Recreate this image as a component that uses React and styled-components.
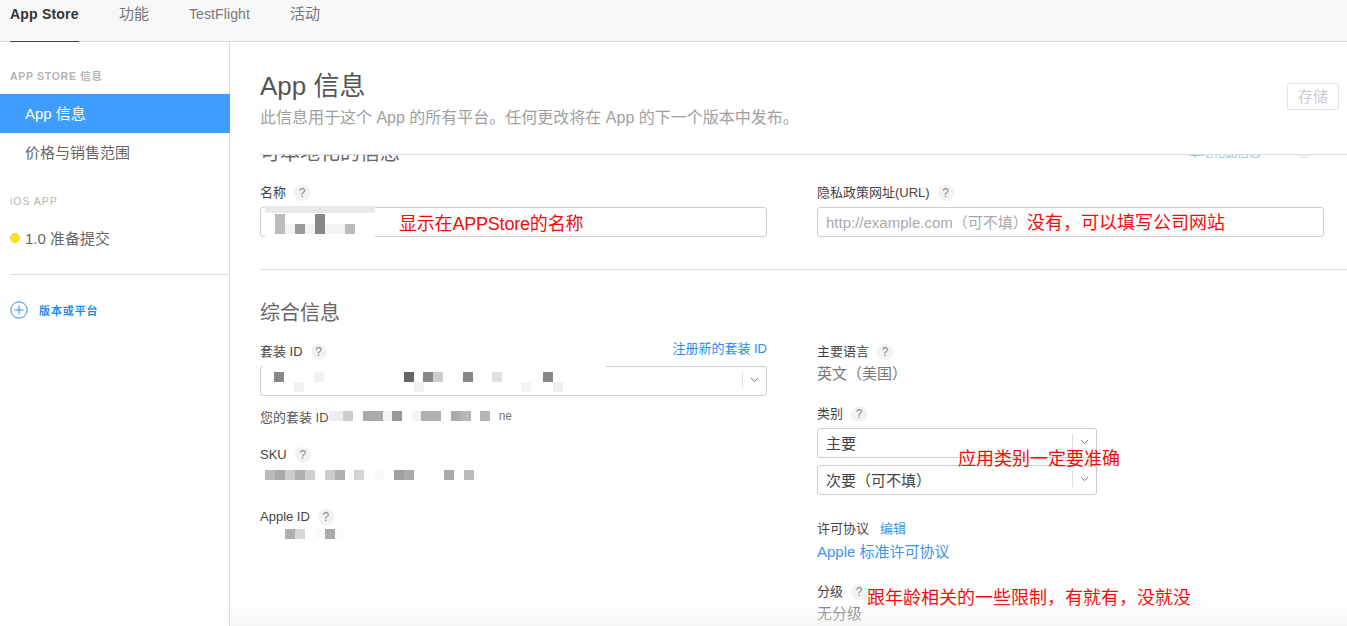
import React from "react";
import styled, { createGlobalStyle } from "styled-components";

const Global = createGlobalStyle`
  html, body { margin: 0; padding: 0; background: #fff; }
  body { font-family: "Liberation Sans", "Noto Sans CJK SC", sans-serif; color: #333; overflow: hidden; }
  * { box-sizing: border-box; }
`;

const Page = styled.div`
  position: relative;
  display: flex;
  flex-direction: column;
  width: 100%;
  height: 626px;
  overflow: hidden;
`;

const TopNav = styled.nav`
  display: flex;
  gap: 40px;
  height: 42px;
  padding-left: 10px;
  background: #f8f8f8;
  border-bottom: 1px solid #d9d9d9;
  flex: none;
`;

const NavItem = styled.a`
  height: 42px;
  padding-top: 5px;
  font-size: 15px;
  line-height: 18px;
  color: #777;
`;

const NavItemLatin = styled(NavItem)`
  font-size: 14px;
  letter-spacing: 0.1px;
`;

const NavItemActive = styled(NavItem)`
  width: 69px;
  font-size: 14px;
  font-weight: 700;
  letter-spacing: 0.2px;
  white-space: nowrap;
  color: #333;
  border-bottom: 1px solid #444;
`;

const Body = styled.div`
  display: flex;
  flex: 1;
  min-height: 0;
`;

const Sidebar = styled.aside`
  width: 230px;
  flex: none;
  padding-top: 28px;
  border-right: 1px solid #dcdcdc;
`;

const SideHeading = styled.h4`
  margin: 0;
  padding-left: 10px;
  height: 24px;
  font-size: 10.5px;
  line-height: 12px;
  font-weight: 700;
  letter-spacing: 0.7px;
  color: #b4b4b4;
`;

const SideItem = styled.a`
  display: block;
  height: 39px;
  margin-right: -1px;
  padding-left: 25px;
  font-size: 15px;
  line-height: 39px;
  color: ${(p) => (p.$active ? "#fff" : "#666")};
  background: ${(p) => (p.$active ? "#3e9dff" : "transparent")};
`;

const SideHeadingIos = styled(SideHeading)`
  margin-top: 23px;
  font-weight: 400;
  letter-spacing: 1px;
`;

const VersionRow = styled.div`
  display: flex;
  align-items: center;
  gap: 5px;
  height: 39px;
  margin-top: -1px;
  padding-left: 10px;
  font-size: 15px;
  color: #666;
`;

const StatusDot = styled.span`
  width: 10px;
  height: 10px;
  border-radius: 50%;
  background: #ffe30f;
  border: 1px solid #e8d23a;
`;

const SideRule = styled.hr`
  margin: 17px 0 0 10px;
  border: 0;
  border-top: 1px solid #dedede;
`;

const AddRow = styled.a`
  display: flex;
  align-items: center;
  gap: 11px;
  margin-top: 26px;
  padding-left: 10px;
  font-size: 11px;
  font-weight: 700;
  letter-spacing: 0.9px;
  color: #1f8bf5;
`;

const Main = styled.main`
  position: relative;
  display: flex;
  flex-direction: column;
  flex: 1;
  min-width: 0;
`;

const Header = styled.header`
  position: relative;
  flex: none;
  height: 113px;
  margin-left: 30px;
  padding-top: 28px;
  border-bottom: 1px solid #dcdcdc;
`;

const Title = styled.h1`
  margin: 0;
  font-size: 26px;
  line-height: 32px;
  font-weight: 400;
  color: #555;
`;

const Subtitle = styled.p`
  margin: 6px 0 0;
  font-size: 16px;
  line-height: 20px;
  color: #a0a0a0;
`;

const SaveButton = styled.button`
  position: absolute;
  top: 41px;
  right: 8px;
  width: 52px;
  height: 27px;
  padding: 0 0 2px;
  font: inherit;
  font-size: 15px;
  color: #ccc;
  background: #fff;
  border: 1px solid #e2e2e2;
  border-radius: 3px;
`;

const Scroller = styled.div`
  flex: 1;
  min-height: 0;
  overflow: hidden;
  padding: 0 23px 0 30px;
`;

const SectionRow = styled.div`
  display: flex;
  justify-content: space-between;
  margin-top: ${(p) => p.$top}px;
  height: 24px;
`;

const SectionTitle = styled.h2`
  margin: 0;
  font-size: 20px;
  line-height: 24px;
  font-weight: 400;
  color: #666;
`;

const FaintLink = styled.a`
  display: flex;
  align-items: center;
  gap: 27px;
  height: 20px;
  padding-right: 12px;
  font-size: 12px;
  color: #8fc2f5;
`;

const Columns = styled.div`
  display: grid;
  grid-template-columns: 507px 507px;
  column-gap: 50px;
  margin-top: ${(p) => p.$top ?? 19}px;
`;

const Field = styled.div`
  margin-top: ${(p) => p.$top || 0}px;
`;

const LabelRow = styled.div`
  position: relative;
  display: flex;
  align-items: center;
  height: 16px;
  padding-top: 2px;
`;

const Label = styled.label`
  font-size: 13px;
  line-height: 16px;
  color: #444;
`;

const Help = styled.span`
  display: inline-flex;
  align-items: center;
  justify-content: center;
  width: 16px;
  height: 16px;
  margin-left: 8px;
  border-radius: 50%;
  background: #f2f2f2;
  font-size: 12px;
  color: #888;
`;

const EditLink = styled.a`
  margin-left: 11px;
  margin-bottom: 3px;
  font-size: 13px;
  color: #3e94ee;
`;

const RegisterLink = styled.a`
  margin-left: auto;
  margin-top: -10px;
  font-size: 13px;
  color: #1f8bf5;
`;

const InputWrap = styled.div`
  position: relative;
  margin-top: 7px;
`;

const TextInput = styled.input`
  display: block;
  width: 100%;
  height: 30px;
  padding: 0 8px;
  font: inherit;
  font-size: 15px;
  background: #fff;
  border: 1px solid #ccc;
  border-radius: 3px;
  &::placeholder { color: #aaa; opacity: 1; }
`;

const SelectBox = styled.div`
  position: relative;
  display: flex;
  align-items: center;
  height: 30px;
  margin-top: ${(p) => p.$top ?? 7}px;
  padding: 0 0 2px 8px;
  font-size: 15px;
  color: #444;
  background: #fff;
  border: 1px solid #ccc;
  border-radius: 3px;
`;

const SelectArrow = styled.span`
  display: flex;
  align-items: center;
  justify-content: center;
  width: 24px;
  height: 16px;
  margin-left: auto;
  border-left: 1px solid #ddd;
  color: #777;
`;

const Note = styled.div`
  display: flex;
  align-items: center;
  height: 16px;
  margin-top: 12px;
  font-size: 13px;
  color: #555;
`;

const ClippedTail = styled.span`
  width: 14px;
  margin-left: 9px;
  overflow: hidden;
  font-size: 12px;
  color: #777;
`;

const Value = styled.div`
  height: 18px;
  margin-top: ${(p) => p.$top}px;
  font-size: 15px;
  line-height: 18px;
  color: ${(p) => (p.$link ? "#3e94ee" : "#777")};
`;

const MosaicSvg = styled.svg`
  display: block;
  flex: none;
  margin-top: ${(p) => p.$top || 0}px;
  filter: blur(0.5px);
`;

const MosaicOver = styled(MosaicSvg)`
  position: absolute;
  left: 0;
  top: 0;
  overflow: visible;
  pointer-events: none;
`;

const Annotation = styled.span`
  position: absolute;
  left: ${(p) => p.$left}px;
  top: ${(p) => p.$top}px;
  font-size: 18px;
  line-height: 24px;
  letter-spacing: ${(p) => p.$spacing || 0}px;
  color: #f60a0a;
  white-space: nowrap;
`;

const BottomFade = styled.div`
  position: absolute;
  left: 0;
  right: 0;
  bottom: 0;
  height: 26px;
  background: linear-gradient(rgba(240, 240, 240, 0), rgba(240, 240, 240, 0.55));
  pointer-events: none;
`;

const SideRuleMain = styled.hr`
  margin: 32px -23px 0 0;
  border: 0;
  border-top: 1px solid #dedede;
`;

const CategoryStack = styled.div`
  position: relative;
  width: 280px;
  margin-top: 7px;
`;

const Mosaic = ({ w, h, blocks, top, over }) => {
  const C = over ? MosaicOver : MosaicSvg;
  return (
    <C width={w} height={h} $top={top} viewBox={`0 0 ${w} ${h}`}>
      {blocks.map(([x, y, bw, bh, fill], i) => (
        <rect key={i} x={x} y={y} width={bw} height={bh} fill={fill} />
      ))}
    </C>
  );
};

const ChevronIcon = () => (
  <svg width="9" height="6" viewBox="0 0 9 6">
    <path d="M1 1.2 L4.5 4.6 L8 1.2" fill="none" stroke="currentColor" strokeWidth="1" />
  </svg>
);

const Select = ({ children, top }) => (
  <SelectBox $top={top}>
    {children}
    <SelectArrow><ChevronIcon /></SelectArrow>
  </SelectBox>
);

const LabelWithHelp = ({ children }) => (
  <>
    <Label>{children}</Label>
    <Help>?</Help>
  </>
);

const nameBlocks = [
  [5, -1, 60, 8, "#fff"],
  [5, -1, 110, 7, "#e9e9e9"],
  [5, 28, 110, 3, "#fff"],
  [25, 17, 60, 10, "#f3f3f3"],
  [15, 7, 10, 20, "#bbb"],
  [35, 17, 10, 10, "#999"],
  [55, 7, 10, 20, "#888"],
  [85, 17, 10, 10, "#bbb"],
];

const bundleBlocks = [
  [3, -1, 343, 3, "#fff"],
  [14, 6, 10, 10, "#888"],
  [34, 16, 10, 10, "#f2f2f2"],
  [54, 6, 10, 10, "#f2f2f2"],
  [144, 6, 10, 10, "#666"],
  [154, 16, 10, 10, "#f2f2f2"],
  [163, 6, 10, 10, "#888"],
  [173, 6, 10, 10, "#ccc"],
  [203, 6, 10, 10, "#888"],
  [232, 6, 10, 10, "#e0e0e0"],
  [261, 16, 10, 10, "#f4f4f4"],
  [283, 6, 10, 10, "#888"],
  [293, 16, 10, 10, "#f0f0f0"],
];

const noteBlocks = [
  [0, 0, 14, 10, "#eee"],
  [14, 0, 10, 10, "#ccc"],
  [34, 0, 20, 10, "#aaa"],
  [54, 0, 9, 10, "#f4f4f4"],
  [63, 0, 10, 10, "#999"],
  [83, 0, 9, 10, "#f4f4f4"],
  [92, 0, 20, 10, "#b0b0b0"],
  [122, 0, 10, 10, "#aaa"],
  [132, 0, 10, 10, "#b8b8b8"],
  [151, 0, 10, 10, "#b5b5b5"],
];

const skuBlocks = [
  [5, 0, 10, 10, "#bbb"],
  [15, 0, 10, 10, "#aaa"],
  [25, 0, 10, 10, "#ccc"],
  [35, 0, 10, 10, "#b0b0b0"],
  [45, 0, 10, 10, "#d0d0d0"],
  [65, 0, 10, 10, "#ccc"],
  [75, 0, 10, 10, "#b0b0b0"],
  [94, 0, 10, 10, "#d4d4d4"],
  [114, 0, 10, 10, "#fafafa"],
  [134, 0, 10, 10, "#a0a0a0"],
  [144, 0, 10, 10, "#aaa"],
  [184, 0, 10, 10, "#aaa"],
  [204, 0, 10, 10, "#bbb"],
];

const appleBlocks = [
  [25, 0, 10, 10, "#b0b0b0"],
  [35, 0, 10, 10, "#d8d8d8"],
  [55, 0, 10, 10, "#fafafa"],
  [65, 0, 10, 10, "#aaa"],
  [75, 0, 10, 10, "#fafafa"],
];

export default function App() {
  return (
    <Page>
      <Global />
      <TopNav>
        <NavItemActive>App Store</NavItemActive>
        <NavItem>功能</NavItem>
        <NavItemLatin>TestFlight</NavItemLatin>
        <NavItem>活动</NavItem>
      </TopNav>
      <Body>
        <Sidebar>
          <SideHeading>APP STORE 信息</SideHeading>
          <SideItem $active>App 信息</SideItem>
          <SideItem>价格与销售范围</SideItem>
          <SideHeadingIos>iOS APP</SideHeadingIos>
          <VersionRow><StatusDot />1.0 准备提交</VersionRow>
          <SideRule />
          <AddRow>
            <svg width="18" height="18" viewBox="0 0 18 18">
              <circle cx="9" cy="9" r="8.2" fill="none" stroke="#2a90f5" strokeWidth="1" />
              <path d="M4.5 9h9M9 4.5v9" stroke="#2a90f5" strokeWidth="1" />
            </svg>
            版本或平台
          </AddRow>
        </Sidebar>
        <Main>
          <Header>
            <Title>App 信息</Title>
            <Subtitle>此信息用于这个 App 的所有平台。任何更改将在 App 的下一个版本中发布。</Subtitle>
            <SaveButton>存储</SaveButton>
          </Header>
          <Scroller>
            <SectionRow $top={-14}>
              <SectionTitle>可本地化的信息</SectionTitle>
              <FaintLink>本地化此信息<Help>?</Help></FaintLink>
            </SectionRow>
            <Columns>
              <Field>
                <LabelRow><LabelWithHelp>名称</LabelWithHelp></LabelRow>
                <InputWrap>
                  <TextInput aria-label="名称" />
                  <Mosaic over w={507} h={30} blocks={nameBlocks} />
                  <Annotation $left={139} $top={5} $spacing={-0.2}>显示在APPStore的名称</Annotation>
                </InputWrap>
              </Field>
              <Field>
                <LabelRow><LabelWithHelp>隐私政策网址(URL)</LabelWithHelp></LabelRow>
                <InputWrap>
                  <TextInput placeholder="http://example.com（可不填）" />
                  <Annotation $left={210} $top={4}>没有，可以填写公司网站</Annotation>
                </InputWrap>
              </Field>
            </Columns>
            <SideRuleMain />
            <SectionRow $top={31}>
              <SectionTitle>综合信息</SectionTitle>
            </SectionRow>
            <Columns $top={18}>
              <div>
                <LabelRow>
                  <LabelWithHelp>套装 ID</LabelWithHelp>
                  <RegisterLink>注册新的套装 ID</RegisterLink>
                </LabelRow>
                <InputWrap>
                  <Select top={0}>&nbsp;</Select>
                  <Mosaic over w={507} h={30} blocks={bundleBlocks} />
                </InputWrap>
                <Note>
                  您的套装 ID
                  <Mosaic w={161} h={10} blocks={noteBlocks} />
                  <ClippedTail>ne.</ClippedTail>
                </Note>
                <Field $top={22}>
                  <LabelRow><LabelWithHelp>SKU</LabelWithHelp></LabelRow>
                  <Mosaic w={220} h={10} top={8} blocks={skuBlocks} />
                </Field>
                <Field $top={28}>
                  <LabelRow><LabelWithHelp>Apple ID</LabelWithHelp></LabelRow>
                  <Mosaic w={90} h={10} top={5} blocks={appleBlocks} />
                </Field>
              </div>
              <div>
                <LabelRow><LabelWithHelp>主要语言</LabelWithHelp></LabelRow>
                <Value $top={6}>英文（美国）</Value>
                <Field $top={22}>
                  <LabelRow><LabelWithHelp>类别</LabelWithHelp></LabelRow>
                  <CategoryStack>
                    <Select top={0}>主要</Select>
                    <Select top={7}>次要（可不填）</Select>
                    <Annotation $left={141} $top={19}>应用类别一定要准确</Annotation>
                  </CategoryStack>
                </Field>
                <Field $top={25}>
                  <LabelRow>
                    <Label>许可协议</Label>
                    <EditLink>编辑</EditLink>
                  </LabelRow>
                  <Value $top={7} $link>Apple 标准许可协议</Value>
                </Field>
                <Field $top={22}>
                  <LabelRow>
                    <LabelWithHelp>分级</LabelWithHelp>
                    <Annotation $left={50} $top={3}>跟年龄相关的一些限制，有就有，没就没</Annotation>
                  </LabelRow>
                  <Value $top={6}>无分级</Value>
                </Field>
              </div>
            </Columns>
          </Scroller>
          <BottomFade />
        </Main>
      </Body>
    </Page>
  );
}
